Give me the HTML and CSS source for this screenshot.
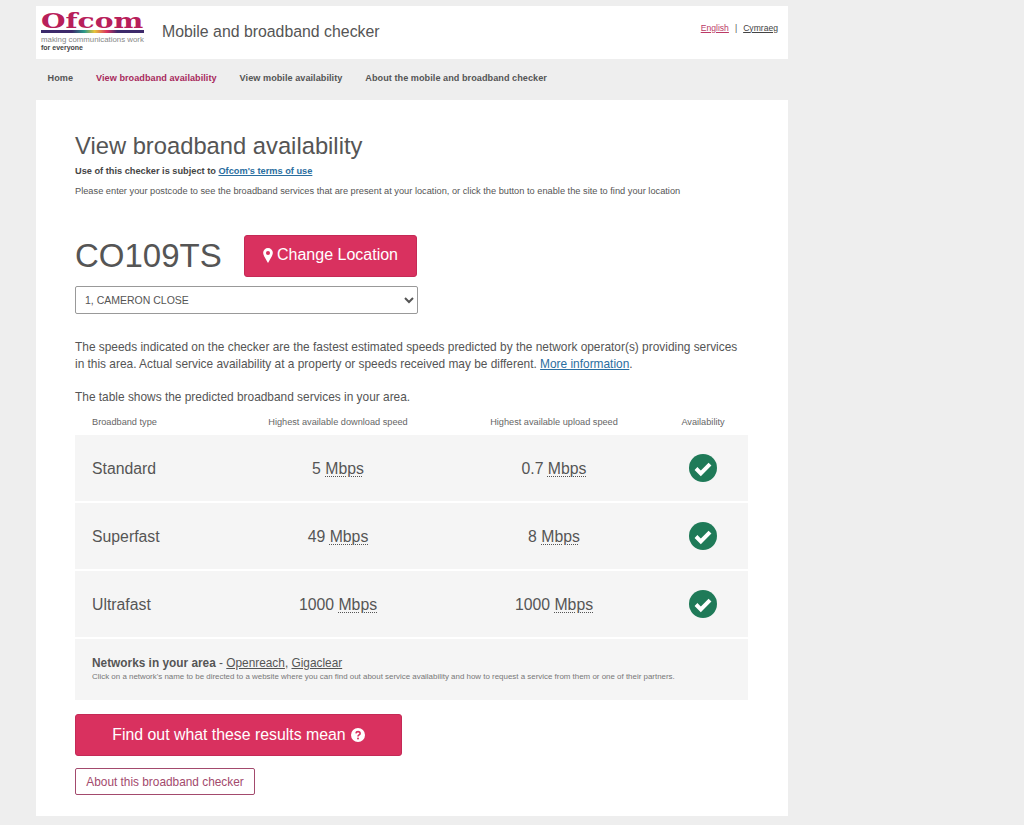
FILE: index.html
```html
<!DOCTYPE html>
<html lang="en">
<head>
<meta charset="utf-8">
<title>Mobile and broadband checker</title>
<link rel="stylesheet" href="styles.css">
</head>
<body>
<div class="wrap">
  <header class="header">
    <div class="logo">
      <div class="logo-word">Ofcom</div>
      <div class="logo-bar"></div>
      <div class="logo-tag">making communications work</div>
      <div class="logo-for">for everyone</div>
    </div>
    <div class="site-title">Mobile and broadband checker</div>
    <div class="lang"><a class="lang-en" href="#">English</a><span class="lang-sep">|</span><a class="lang-cy" href="#">Cymraeg</a></div>
  </header>
  <nav class="nav">
    <a href="#">Home</a>
    <a href="#" class="active">View broadband availability</a>
    <a href="#">View mobile availability</a>
    <a href="#">About the mobile and broadband checker</a>
  </nav>
  <main class="card">
    <h1>View broadband availability</h1>
    <p class="terms">Use of this checker is subject to <a href="#">Ofcom's terms of use</a></p>
    <p class="intro">Please enter your postcode to see the broadband services that are present at your location, or click the button to enable the site to find your location</p>
    <div class="loc-row">
      <div class="postcode">CO109TS</div>
      <a class="btn btn-loc" href="#">
        <svg class="pin" viewBox="1 0 10 15.500"><path fill-rule="evenodd" fill="#fff" d="M6 0a5 5 0 0 0-5 5c0 3 3.500 7.500 5 10.500C7.500 12.500 11 8 11 5a5 5 0 0 0-5-5zm0 3a2.100 2.100 0 1 1 0 4.200A2.100 2.100 0 0 1 6 3z"/></svg>
        Change Location
      </a>
    </div>
    <select class="addr"><option>1, CAMERON CLOSE</option></select>
    <p class="body-text first">The speeds indicated on the checker are the fastest estimated speeds predicted by the network operator(s) providing services in this area. Actual service availability at a property or speeds received may be different. <a href="#">More information</a>.</p>
    <p class="body-text second">The table shows the predicted broadband services in your area.</p>
    <div class="table">
      <div class="thead">
        <div class="c1">Broadband type</div>
        <div class="c2">Highest available download speed</div>
        <div class="c3">Highest available upload speed</div>
        <div class="c4">Availability</div>
      </div>
      <div class="row">
        <div class="c1">Standard</div>
        <div class="c2">5 <abbr>Mbps</abbr></div>
        <div class="c3">0.7 <abbr>Mbps</abbr></div>
        <div class="c4"><svg class="tick" viewBox="0 0 28 28"><circle cx="14" cy="14" r="14" fill="#1f7a58"/><path d="M7 14.500l4.800 4.800 9.200-9.200" fill="none" stroke="#fff" stroke-width="4"/></svg></div>
      </div>
      <div class="row">
        <div class="c1">Superfast</div>
        <div class="c2">49 <abbr>Mbps</abbr></div>
        <div class="c3">8 <abbr>Mbps</abbr></div>
        <div class="c4"><svg class="tick" viewBox="0 0 28 28"><circle cx="14" cy="14" r="14" fill="#1f7a58"/><path d="M7 14.500l4.800 4.800 9.200-9.200" fill="none" stroke="#fff" stroke-width="4"/></svg></div>
      </div>
      <div class="row">
        <div class="c1">Ultrafast</div>
        <div class="c2">1000 <abbr>Mbps</abbr></div>
        <div class="c3">1000 <abbr>Mbps</abbr></div>
        <div class="c4"><svg class="tick" viewBox="0 0 28 28"><circle cx="14" cy="14" r="14" fill="#1f7a58"/><path d="M7 14.500l4.800 4.800 9.200-9.200" fill="none" stroke="#fff" stroke-width="4"/></svg></div>
      </div>
      <div class="networks">
        <div class="net-line"><strong>Networks in your area</strong> - <a href="#">Openreach</a>, <a href="#">Gigaclear</a></div>
        <div class="net-note">Click on a network's name to be directed to a website where you can find out about service availability and how to request a service from them or one of their partners.</div>
      </div>
    </div>
    <a class="btn btn-find" href="#">Find out what these results mean
      <svg class="help" viewBox="0 0 14 14"><circle cx="7" cy="7" r="7" fill="#fff"/><path d="M4.900 5.300c.2-1.100 1-1.700 2.100-1.700 1.200 0 2.100.7 2.100 1.800 0 1.600-2.100 1.500-2.100 3" fill="none" stroke="#d9315f" stroke-width="1.600"/><circle cx="7" cy="10.500" r="1" fill="#d9315f"/></svg>
    </a>
    <a class="btn-about" href="#">About this broadband checker</a>
  </main>
</div>
</body>
</html>
```
FILE: styles.css
```css
* { box-sizing: border-box; }
html, body { margin: 0; padding: 0; }
body {
  background: #eeeeee;
  font-family: "Liberation Sans", Arial, sans-serif;
  color: #555;
  height: 825px;
  overflow: hidden;
}
a { color: inherit; }
.wrap { width: 752px; margin-left: 36px; padding-top: 6px; }

.header {
  height: 53px;
  background: #fff;
  display: flex;
  align-items: center;
  padding: 0 10px 0 5px;
}
.logo { width: 121px; height: 47px; display: flex; flex-direction: column; }
.logo-word {
  font-family: "DejaVu Serif", "Liberation Serif", serif;
  font-weight: 700;
  font-size: 21px;
  line-height: 21px;
  height: 21px;
  padding-top: 1px;
  color: #b8205a;
  transform: scaleX(1.34);
  transform-origin: left center;
}
.logo-bar {
  width: 103px;
  height: 3px;
  background: linear-gradient(90deg, #3d2a6b 0, #3d2a6b 30%, #2a9a8a 42%, #e8c53a 52%, #d9315f 64%, #3d2a6b 74%, #3d2a6b 100%);
}
.logo-tag { font-size: 7.850px; line-height: 9px; margin-top: 2px; color: #888; white-space: nowrap; }
.logo-for { font-size: 7px; line-height: 9px; margin-top: -1px; font-weight: 700; color: #444; }
.site-title { font-size: 15.850px; color: #555; margin-top: -2px; }
.lang { margin-left: auto; margin-top: -10px; font-size: 8.600px; }
.lang-en { color: #bb3a66; }
.lang-sep { margin: 0 6px 0 6px; }
.lang-cy { color: #444; }

.nav {
  height: 41px;
  display: flex;
  align-items: center;
  gap: 23px;
  padding: 0 0 3px 11.500px;
  font-size: 9.150px;
  letter-spacing: 0.04px;
  font-weight: 700;
}
.nav a { text-decoration: none; color: #555; }
.nav a.active { color: #a82a5c; }

.card {
  background: #fff;
  height: 716px;
  padding: 30px 40px 0 39px;
  display: block;
}
h1 { margin: 0; font-size: 23.750px; line-height: 32px; font-weight: 400; color: #555; }
.terms { margin: 3px 0 0; font-size: 9.230px; line-height: 12px; font-weight: 700; color: #444; }
.terms a { color: #2a6ea0; }
.intro { margin: 8px 0 0; font-size: 9.250px; line-height: 12px; color: #555; }
.loc-row { display: flex; align-items: center; margin-top: 38px; height: 42px; }
.postcode { width: 169px; font-size: 33px; color: #555; line-height: 42px; }
.btn {
  display: flex;
  align-items: center;
  justify-content: center;
  background: #d9315f;
  border: 1px solid #c42a56;
  color: #fff;
  text-decoration: none;
  border-radius: 3px;
}
.btn-loc { width: 173px; height: 42px; padding-bottom: 2px; font-size: 16px; gap: 4px; }
.pin { width: 10px; height: 15px; }
.addr {
  display: block;
  width: 343px;
  height: 28px;
  margin-top: 9px;
  border: 1px solid #999;
  border-radius: 2px;
  background: #fff;
  font-family: "Liberation Sans", Arial, sans-serif;
  font-size: 10.500px;
  color: #555;
  padding-left: 5px;
}
.body-text { margin: 0; font-size: 11.900px; line-height: 17px; color: #555; width: 670px; }
.body-text a { color: #2a6ea0; }
.first { margin-top: 25px; }
.second { margin-top: 16px; }

.table { width: 673px; margin-top: 3px; }
.thead, .row { display: grid; grid-template-columns: 155px 216px 216px 82px; align-items: center; }
.thead { height: 26px; font-size: 9.200px; color: #666; }
.row { height: 66px; margin-bottom: 2px; background: #f5f5f5; font-size: 15.800px; }
.row .c1, .row .c2, .row .c3 { padding-top: 2px; }
.c1 { padding-left: 17px; }
.c2, .c3, .c4 { text-align: center; }
.c4 { display: flex; justify-content: center; }
abbr { text-decoration: underline dotted; text-underline-offset: 2px; text-decoration-thickness: 1px; }
.tick { width: 28px; height: 28px; display: block; }
.networks { background: #f5f5f5; height: 61px; padding: 17px 17px 0; }
.net-line { font-size: 11.850px; line-height: 15px; }
.net-note { font-size: 7.930px; line-height: 9px; margin-top: 1px; color: #777; white-space: nowrap; }

.btn-find { width: 327px; height: 42px; margin-top: 14px; padding-bottom: 1px; font-size: 15.850px; gap: 5px; }
.help { width: 14px; height: 14px; }
.btn-about {
  display: flex;
  align-items: center;
  justify-content: center;
  width: 180px;
  height: 27px;
  margin-top: 12px;
  border: 1px solid #a34a6d;
  border-radius: 2px;
  font-size: 11.850px;
  color: #a34a6d;
  text-decoration: none;
}
```
